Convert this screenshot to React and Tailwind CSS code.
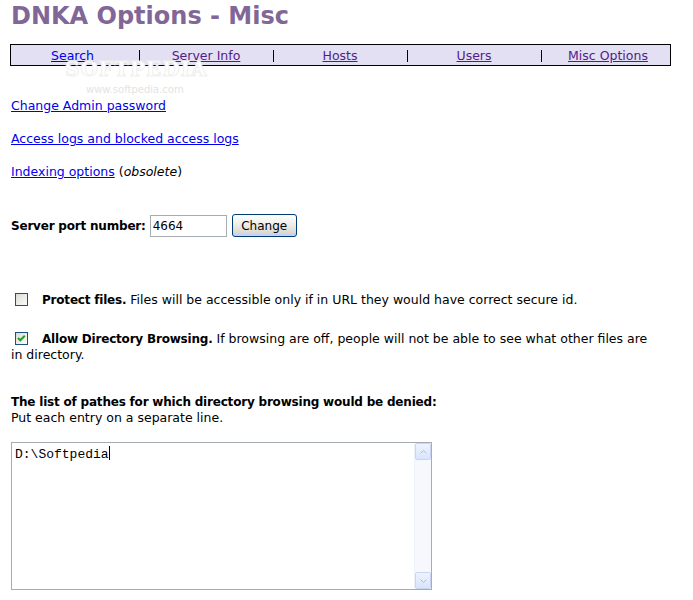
import React from "react";

const Sep = () => (
  <div className="w-[10px] flex justify-center">
    <div className="w-px h-[12px] bg-black mt-[1px]" />
  </div>
);

const NavLink = ({ children, visited, first }) => (
  <div className={(first ? "w-[123px]" : "w-[124px]") + " text-center"}>
    <span className={"underline " + (visited ? "text-[#551a8b]" : "text-[#0000ee]")}>{children}</span>
  </div>
);

const Check = ({ checked }) => (
  <span className="inline-block align-[-2px] ml-[5px] mr-[14px] w-[13px] h-[13px] border border-[#1c5180] bg-gradient-to-br from-[#dcdcd6] to-[#fbfbfa] relative">
    {checked && (
      <svg className="absolute left-[1px] top-[1px]" width="9" height="9" viewBox="0 0 9 9">
        <path d="M1 4 L3.3 6.3 L7.8 1.8" stroke="#21a121" strokeWidth="2" fill="none" />
      </svg>
    )}
  </span>
);

const B = ({ children }) => <b className="text-[12px] tracking-[-0.2px]">{children}</b>;

export default function App() {
  return (
    <div className="relative min-h-[600px] bg-white px-[10px] font-['DejaVu_Sans',Verdana,sans-serif] text-[12.5px] leading-4 text-black">
      <div className="pt-[1px] h-[44px]">
        <h1 className="text-[24px] font-bold leading-[30px] text-[#816797] pl-[1px]">DNKA Options - Misc</h1>
      </div>
      <div className="w-[661px] h-[22px] border border-black bg-[#e2e0f2] flex items-center pt-[1px]">
        <NavLink first>Search</NavLink>
        <Sep />
        <NavLink visited>Server Info</NavLink>
        <Sep />
        <NavLink visited>Hosts</NavLink>
        <Sep />
        <NavLink visited>Users</NavLink>
        <Sep />
        <NavLink visited>Misc Options</NavLink>
      </div>

      <div className="absolute left-[65px] top-[59px] text-[20px] leading-none font-['DejaVu_Serif',serif] font-bold text-white tracking-[1px] [-webkit-text-stroke:1px_#f0f0f0] pointer-events-none">SOFTPEDIA</div>
      <div className="absolute left-[86px] top-[85px] text-[10px] leading-none text-[#e4e4e4] pointer-events-none">www.softpedia.com</div>

      <div className="mt-[32px] flex flex-col gap-[17px] pl-[1px]">
        <div><span className="underline text-[#0000ee]">Change Admin password</span></div>
        <div><span className="underline text-[#0000ee]">Access logs and blocked access logs</span></div>
        <div>
          <span className="underline text-[#0000ee]">Indexing options</span> (<i>obsolete</i>)
        </div>
      </div>

      <div className="mt-[34px] flex items-center h-[23px] pl-[1px]">
        <B>Server port number:</B>
        <div className="ml-[4px] w-[77px] h-[22px] border border-[#a5acb2] bg-white flex items-center pl-[2px] text-[12px]">4664</div>
        <div className="ml-[5px] w-[65px] h-[23px] border border-[#003c74] rounded-[3px] bg-gradient-to-b from-[#ffffff] via-[#ecebe6] to-[#d6d0c5] flex items-center justify-center text-[12px] shadow-[inset_0_-2px_0_#c1d3fb]">
          Change
        </div>
      </div>

      <p className="mt-[55px] whitespace-nowrap">
        <Check />
        <B>Protect files.</B> Files will be accessible only if in URL they would have correct secure id.
      </p>
      <p className="mt-[23px]">
        <span className="whitespace-nowrap">
          <Check checked />
          <B>Allow Directory Browsing.</B> If browsing are off, people will not be able to see what other files are
        </span>
        <br />
        <span className="pl-[1px]">in directory.</span>
      </p>

      <p className="mt-[31px] leading-[15px] pl-[1px]">
        <B>The list of pathes for which directory browsing would be denied:</B>
        <br />Put each entry on a separate line.
      </p>

      <div className="mt-[17px] ml-[1px] w-[421px] h-[148px] border border-[#a5acb2] flex bg-white">
        <div className="flex-1 pl-[3px] pt-[3px] font-['Liberation_Mono',monospace] text-[13px] leading-[16px]">
          D:\Softpedia<span className="inline-block w-px h-[14px] bg-black align-[-2px]" />
        </div>
        <div className="w-[17px] bg-[#f6f8fe] border-l border-[#eef2fb] flex flex-col justify-between">
          <div className="h-[17px] border border-[#c8d5f5] rounded-[2px] bg-gradient-to-b from-[#eef3fe] to-[#d9e4fc] flex items-center justify-center">
            <svg width="7" height="4" viewBox="0 0 7 4"><path d="M0.5 3.5 L3.5 0.5 L6.5 3.5" stroke="#a9bde6" fill="none" /></svg>
          </div>
          <div className="h-[17px] border border-[#c8d5f5] rounded-[2px] bg-gradient-to-b from-[#eef3fe] to-[#d9e4fc] flex items-center justify-center">
            <svg width="7" height="4" viewBox="0 0 7 4"><path d="M0.5 0.5 L3.5 3.5 L6.5 0.5" stroke="#a9bde6" fill="none" /></svg>
          </div>
        </div>
      </div>
    </div>
  );
}
